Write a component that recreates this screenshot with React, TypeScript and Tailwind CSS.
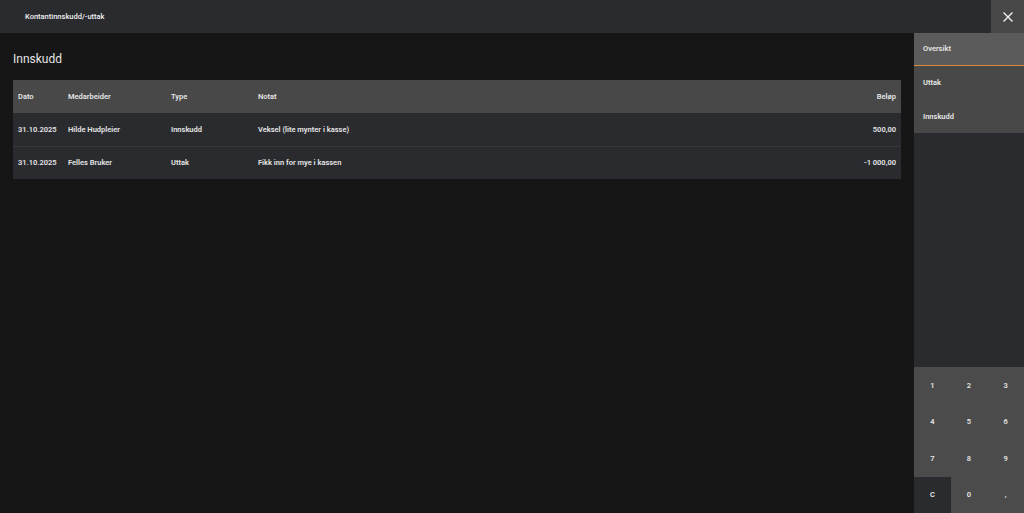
import React from "react";

const rows = [
  { dato: "31.10.2025", med: "Hilde Hudpleier", type: "Innskudd", notat: "Veksel (lite mynter i kasse)", belop: "500,00" },
  { dato: "31.10.2025", med: "Felles Bruker", type: "Uttak", notat: "Fikk inn for mye i kassen", belop: "-1 000,00" },
];

const keys = ["1", "2", "3", "4", "5", "6", "7", "8", "9", "C", "0", ","];

export default function App() {
  return (
    <div className="w-[1024px] h-[513px] flex flex-col bg-[#161616] text-[#e6e6e6] overflow-hidden" style={{ fontFamily: "Roboto, 'Liberation Sans', sans-serif" }}>
      <div className="h-[33px] flex items-stretch bg-[#2a2b2f] shrink-0">
        <div className="flex-1 flex items-center pl-[25px] text-[7.5px] font-medium text-[#f0f0f0]">Kontantinnskudd/-uttak</div>
        <button className="w-[33px] bg-[#474847] flex items-center justify-center">
          <svg width="10" height="10" viewBox="0 0 10 10" stroke="#f2f2f2" strokeWidth="1.3" strokeLinecap="square">
            <path d="M1 1 L9 9 M9 1 L1 9" />
          </svg>
        </button>
      </div>
      <div className="flex-1 flex min-h-0">
        <div className="flex-1 pl-[13px] pr-[13px] pt-[19px]">
          <div className="text-[12px] text-[#e4e4e4] h-[14px] leading-[14px]">Innskudd</div>
          <div className="mt-[14px] bg-[#2a2b2f] text-[7.5px] font-semibold">
            <div className="h-[33px] bg-[#474847] flex items-center px-[5px]">
              <div className="w-[50px]">Dato</div>
              <div className="w-[103px]">Medarbeider</div>
              <div className="w-[87px]">Type</div>
              <div className="flex-1">Notat</div>
              <div className="text-right">Beløp</div>
            </div>
            {rows.map((r, i) => (
              <div key={i} className={`h-[33px] flex items-center px-[5px] ${i > 0 ? "border-t border-[#37383c]" : ""}`}>
                <div className="w-[50px]">{r.dato}</div>
                <div className="w-[103px]">{r.med}</div>
                <div className="w-[87px]">{r.type}</div>
                <div className="flex-1">{r.notat}</div>
                <div className="text-right">{r.belop}</div>
              </div>
            ))}
          </div>
        </div>
        <div className="w-[110px] flex flex-col bg-[#2a2b2f] text-[7.5px] font-semibold">
          <div className="h-[32px] bg-[#5b5b5b] flex items-center pl-[9px]">Oversikt</div>
          <div className="h-[1px] bg-[#d9893a]" />
          <div className="h-[34px] bg-[#474847] flex items-center pl-[9px]">Uttak</div>
          <div className="h-[33px] bg-[#474847] flex items-center pl-[9px]">Innskudd</div>
          <div className="flex-1" />
          <div className="grid grid-cols-3 grid-rows-4 h-[146px] bg-[#4a4b4a]">
            {keys.map((k) => (
              <div key={k} className={`flex items-center justify-center ${k === "C" ? "bg-[#2a2b2f]" : ""}`}>{k}</div>
            ))}
          </div>
        </div>
      </div>
    </div>
  );
}
